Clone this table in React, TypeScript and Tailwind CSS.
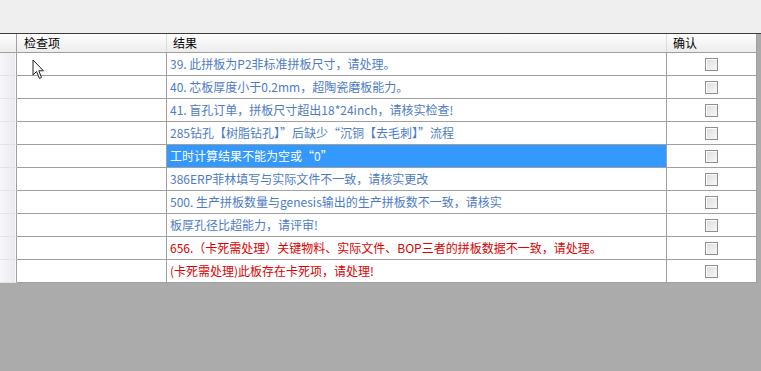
import React from "react";

type CheckRow = {
  item: string;
  result: string;
  tone: "blue" | "red";
  selected?: boolean;
};

const ROWS: CheckRow[] = [
  { item: "", result: "39. 此拼板为P2非标准拼板尺寸，请处理。", tone: "blue" },
  { item: "", result: "40. 芯板厚度小于0.2mm，超陶瓷磨板能力。", tone: "blue" },
  { item: "", result: "41. 盲孔订单，拼板尺寸超出18*24inch，请核实检查!", tone: "blue" },
  { item: "", result: "285钻孔【树脂钻孔】”后缺少“沉铜【去毛刺】”流程", tone: "blue" },
  { item: "", result: "工时计算结果不能为空或“0”", tone: "blue", selected: true },
  { item: "", result: "386ERP菲林填写与实际文件不一致，请核实更改", tone: "blue" },
  { item: "", result: "500. 生产拼板数量与genesis输出的生产拼板数不一致，请核实", tone: "blue" },
  { item: "", result: "板厚孔径比超能力，请评审!", tone: "blue" },
  { item: "", result: "656.（卡死需处理）关键物料、实际文件、BOP三者的拼板数据不一致，请处理。", tone: "red" },
  { item: "", result: "(卡死需处理)此板存在卡死项，请处理!", tone: "red" },
];

const FONT = "font-['SimSun','Noto_Sans_CJK_SC',sans-serif]";

function Checkbox() {
  return (
    <span className="block w-[13px] h-[13px] border border-[#8f8f8f] bg-gradient-to-br from-[#dcdcdc] to-[#f8f8f8] shadow-[inset_1px_1px_0_#fff]" />
  );
}

function Cursor() {
  return (
    <svg
      className="absolute left-[32px] top-[59px]"
      width="14"
      height="21"
      viewBox="0 0 14 21"
    >
      <path
        d="M1 1 L1 16 L4.5 12.5 L7.5 19.5 L9.5 18.5 L6.8 11.8 L11.5 11.8 Z"
        fill="#fff"
        stroke="#222"
        strokeWidth="1"
        strokeLinejoin="miter"
      />
    </svg>
  );
}

export default function App() {
  return (
    <div className={`relative w-[761px] h-[371px] bg-[#ababab] overflow-hidden ${FONT}`}>
      <div className="h-[33px] bg-[#efefef] border-b border-[#3c3c3c] box-content" />

      <div className="w-[757px] bg-white">
        {/* header */}
        <div className="flex h-[19px] border-b border-[#a0a0a0] bg-gradient-to-b from-white to-[#ececec] text-[12px] text-black">
          <div className="w-[17px] border-r border-[#a0a0a0]" />
          <div className="w-[150px] border-r border-[#dcdcdc] pl-[7px] flex items-center">检查项</div>
          <div className="w-[500px] border-r border-[#dcdcdc] pl-[6px] flex items-center">结果</div>
          <div className="w-[90px] border-r border-[#a0a0a0] pl-[6px] flex items-center">确认</div>
        </div>

        {ROWS.map((row, i) => (
          <div key={i} className="flex h-[23px] text-[12px]">
            <div className="w-[17px] border-r border-[#a0a0a0] border-b border-b-[#e2e2ea] bg-gradient-to-r from-[#f7f7fa] to-[#e9e9ef] shadow-[inset_-1px_0_0_#fafafa]" />
            <div className="w-[150px] border-r border-b border-[#a0a0a0] pl-[6px] flex items-center">
              {row.item}
            </div>
            <div
              className={`w-[500px] border-r border-b border-[#a0a0a0] pl-[3px] flex items-center whitespace-nowrap overflow-hidden ${
                row.selected
                  ? "bg-[#3399ff] text-white"
                  : row.tone === "red"
                  ? "text-[#e00000]"
                  : "text-[#4d7bc9]"
              }`}
            >
              {row.result}
            </div>
            <div className="w-[90px] border-r border-b border-[#a0a0a0] flex items-center justify-center pr-[1px]">
              <Checkbox />
            </div>
          </div>
        ))}
      </div>

      <Cursor />
    </div>
  );
}
